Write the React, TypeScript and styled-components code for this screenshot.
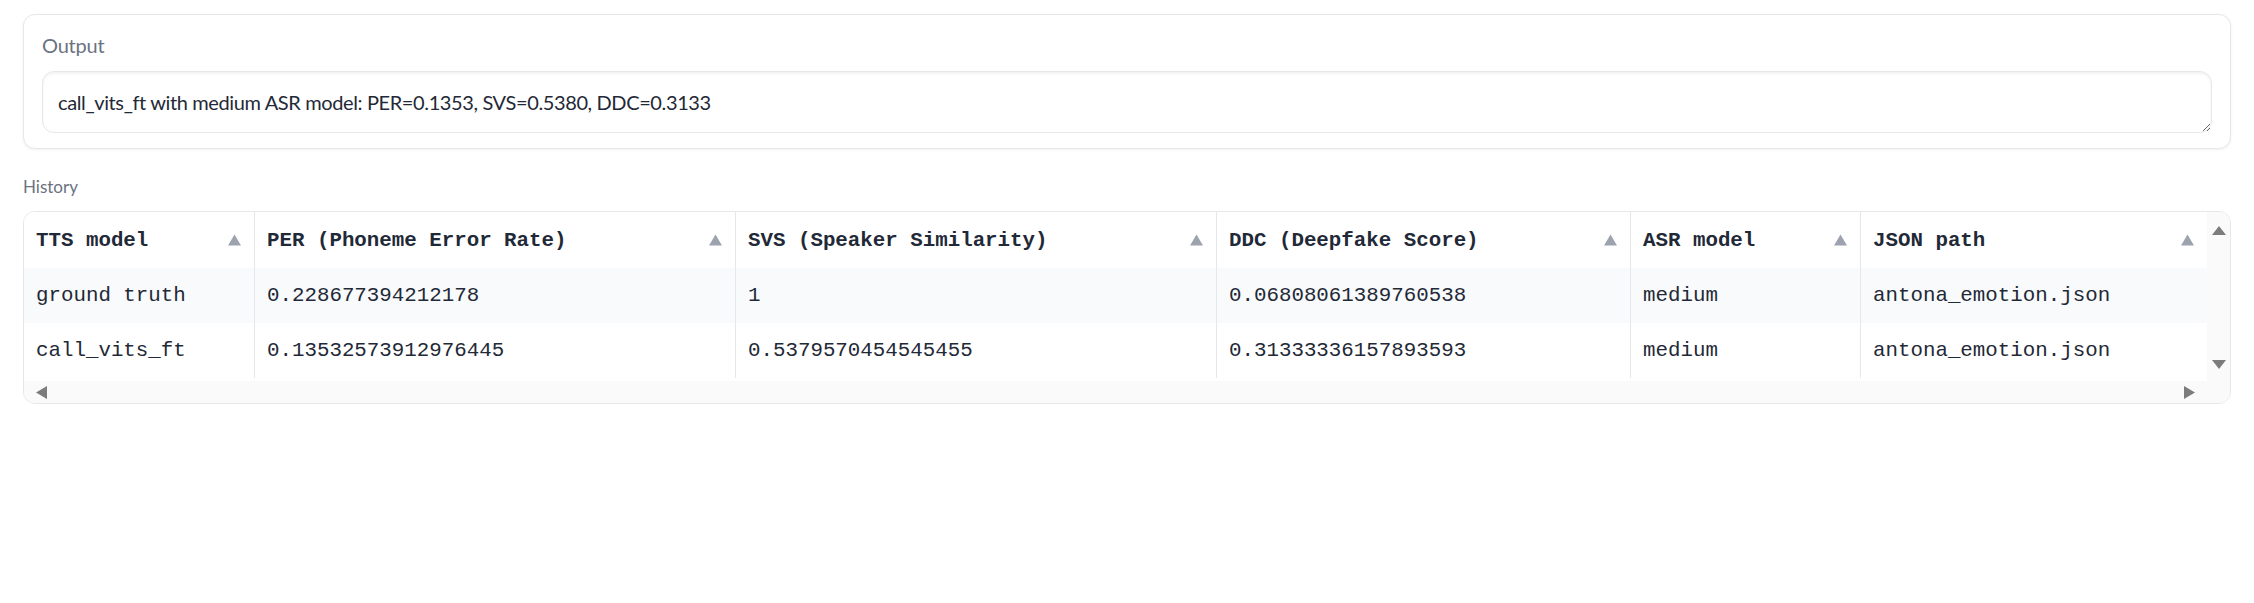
import React from "react";
import styled, { createGlobalStyle } from "styled-components";

const GlobalStyle = createGlobalStyle`
  html, body {
    margin: 0;
    padding: 0;
    background: #ffffff;
    font-family: Lato, "Noto Sans", sans-serif;
  }
  * { box-sizing: border-box; }
`;

const Page = styled.div`
  display: flex;
  flex-direction: column;
  padding: 14px 23px 0;
`;

const Block = styled.div`
  display: flex;
  flex-direction: column;
  border: 1px solid #e5e7eb;
  border-radius: 12px;
  background: #ffffff;
  box-shadow: 0 1px 3px rgba(0, 0, 0, 0.06);
  padding: 16px 18px 15px;
`;

const BlockLabel = styled.span<{ $size: number }>`
  display: block;
  font-size: ${(p) => p.$size}px;
  line-height: 28px;
  letter-spacing: -0.2px;
  color: #6b7280;
`;

const OutputText = styled.textarea`
  display: block;
  width: 100%;
  height: 62px;
  margin-top: 12px;
  border: 1px solid #e5e7eb;
  border-radius: 12px;
  padding: 16px 15px;
  font-family: Lato, "Noto Sans", sans-serif;
  font-size: 20px;
  line-height: 28px;
  letter-spacing: -0.38px;
  color: #1f2937;
  background: #ffffff;
  box-shadow: inset 0 2px 3px rgba(0, 0, 0, 0.05);
  resize: vertical;
  outline: none;
  overflow: hidden;
`;

const Section = styled.section`
  display: flex;
  flex-direction: column;
  margin-top: 26px;
`;

const SectionLabel = styled.span`
  display: block;
  font-size: 17px;
  line-height: 24px;
  color: #6b7280;
  margin-bottom: 12px;
`;

const TableFrame = styled.div`
  display: grid;
  grid-template-columns: 1fr 23px;
  grid-template-rows: auto 22px;
  border: 1px solid #e5e7eb;
  border-radius: 12px;
  overflow: hidden;
  background: #ffffff;
`;

const DataGrid = styled.div`
  display: flex;
  flex-direction: column;
  padding-bottom: 3px;
`;

const COLS = "231px 481px 481px 414px 230px 346px";

const Row = styled.div<{ $height: number; $striped?: boolean }>`
  display: grid;
  grid-template-columns: ${COLS};
  height: ${(p) => p.$height}px;
  background: ${(p) => (p.$striped ? "#f9fafb" : "#ffffff")};
`;

const Cell = styled.div<{ $head?: boolean }>`
  display: flex;
  align-items: center;
  justify-content: space-between;
  padding: 0 13px 0 12px;
  border-right: 1px solid #e5e7eb;
  font-family: "Liberation Mono", "DejaVu Sans Mono", monospace;
  font-size: 20.8px;
  font-weight: ${(p) => (p.$head ? 700 : 400)};
  color: #1f2937;
  white-space: nowrap;
  overflow: hidden;
  &:last-child {
    border-right: none;
  }
`;

const VTrack = styled.div`
  display: flex;
  flex-direction: column;
  align-items: center;
  justify-content: space-between;
  padding: 14px 0 12px;
  background: #fafafa;
`;

const HTrack = styled.div`
  display: flex;
  align-items: center;
  justify-content: space-between;
  padding: 0 12px;
  background: #fafafa;
`;

const Corner = styled.div`
  background: #fafafa;
`;

const SortIcon = () => (
  <svg width="13" height="12" viewBox="0 0 13 12" aria-hidden>
    <polygon points="6.5,0.5 13,11.5 0,11.5" fill="#9ca3af" />
  </svg>
);

type Dir = "up" | "down" | "left" | "right";

const ScrollArrow = ({ dir }: { dir: Dir }) => {
  const horizontal = dir === "left" || dir === "right";
  const w = horizontal ? 11 : 14;
  const h = horizontal ? 13 : 9;
  const pts: Record<Dir, string> = {
    up: "7,0 14,9 0,9",
    down: "0,0 14,0 7,9",
    left: "0,6.5 11,0 11,13",
    right: "0,0 11,6.5 0,13",
  };
  return (
    <svg width={w} height={h} viewBox={`0 0 ${w} ${h}`} aria-hidden>
      <polygon points={pts[dir]} fill="#7c7c7c" />
    </svg>
  );
};

const headers = [
  "TTS model",
  "PER (Phoneme Error Rate)",
  "SVS (Speaker Similarity)",
  "DDC (Deepfake Score)",
  "ASR model",
  "JSON path",
];

const rows = [
  ["ground truth", "0.228677394212178", "1", "0.06808061389760538", "medium", "antona_emotion.json"],
  ["call_vits_ft", "0.13532573912976445", "0.5379570454545455", "0.31333336157893593", "medium", "antona_emotion.json"],
];

export default function App() {
  return (
    <>
      <GlobalStyle />
      <Page>
        <Block>
          <BlockLabel $size={20}>Output</BlockLabel>
          <OutputText
            readOnly
            rows={1}
            value="call_vits_ft with medium ASR model: PER=0.1353, SVS=0.5380, DDC=0.3133"
          />
        </Block>
        <Section>
          <SectionLabel>History</SectionLabel>
          <TableFrame>
            <DataGrid>
              <Row $height={56}>
                {headers.map((h) => (
                  <Cell $head key={h}>
                    <span>{h}</span>
                    <SortIcon />
                  </Cell>
                ))}
              </Row>
              {rows.map((r, i) => (
                <Row $height={55} $striped={i % 2 === 0} key={i}>
                  {r.map((c, j) => (
                    <Cell key={j}>{c}</Cell>
                  ))}
                </Row>
              ))}
            </DataGrid>
            <VTrack>
              <ScrollArrow dir="up" />
              <ScrollArrow dir="down" />
            </VTrack>
            <HTrack>
              <ScrollArrow dir="left" />
              <ScrollArrow dir="right" />
            </HTrack>
            <Corner />
          </TableFrame>
        </Section>
      </Page>
    </>
  );
}
